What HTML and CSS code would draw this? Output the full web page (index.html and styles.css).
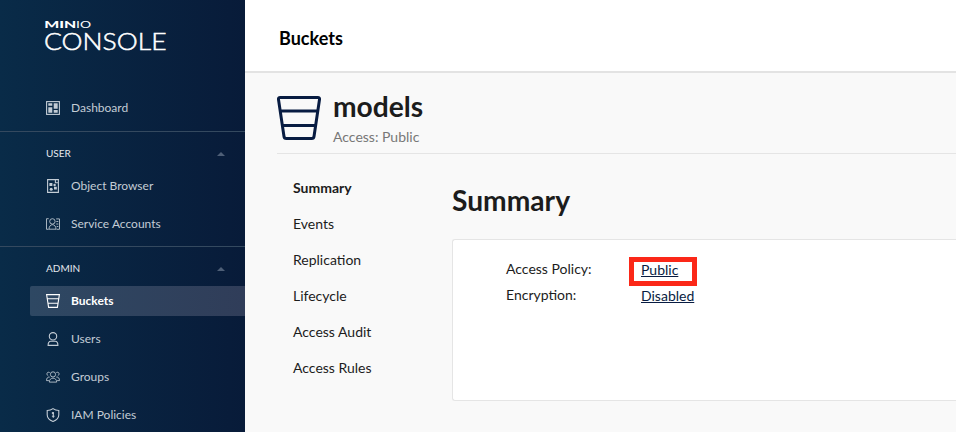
FILE: index.html
```html
<!DOCTYPE html>
<html lang="en">
<head>
<meta charset="utf-8">
<title>MinIO Console</title>
<link rel="stylesheet" href="styles.css">
</head>
<body>
<div class="app">
  <aside class="sidebar">
    <svg class="logo" width="130" height="36" viewBox="0 0 130 36">
      <text class="logo-min" x="-0.7" y="10.3" textLength="32" lengthAdjust="spacingAndGlyphs">MIN</text>
      <text class="logo-io" x="31" y="10.3" textLength="15" lengthAdjust="spacingAndGlyphs">IO</text>
      <text class="logo-console" x="-1" y="32" textLength="122.5" lengthAdjust="spacingAndGlyphs">CONSOLE</text>
    </svg>
    <nav>
      <section class="group first">
        <a class="item"><svg viewBox="0 0 14 14"><rect x=".6" y=".6" width="12.8" height="12.8"/><path class="solid" d="M2.3 2.3h4v2.5h-4zM2.3 6.2h4v5.5h-4zM7.7 2.3h4v5.4h-4zM7.7 9.1h4v2.6h-4z"/></svg><span>Dashboard</span></a>
      </section>
      <section class="group">
        <h2>USER<i class="caret"></i></h2>
        <a class="item"><svg viewBox="0 0 14 14"><path d="M1.6.6h10.8v12.8H1.6zM9.4.8v2.9h2.8"/><path class="solid" d="M3.4 4h3v3h-3zM8 7.8h2.8v2.8H8z"/><circle class="solid" cx="8.6" cy="6" r="1.2"/><circle class="solid" cx="5.2" cy="10.2" r="1.5"/></svg><span>Object Browser</span></a>
        <a class="item"><svg class="thin" viewBox="0 0 14 14"><path d="M2.7 1.7H.5v10.6h2.2M3 12.2c0-6 7-6 7 0zM10.2 1.9h3.3v10.4h-3M10.3 4.5h2M10.3 7h2M10.7 9.5h1.6"/><circle cx="6.4" cy="4.4" r="2.7"/></svg><span>Service Accounts</span></a>
      </section>
      <section class="group">
        <h2>ADMIN<i class="caret"></i></h2>
        <a class="item active"><svg viewBox="0 0 14 14"><path d="M.6.6h12.8l-2 12.8H2.6zM1.2 4.8h11.6M1.9 9.2h10.2"/></svg><span>Buckets</span></a>
        <a class="item"><svg viewBox="0 0 14 14"><circle cx="7" cy="4.3" r="3.7"/><path d="M4.8 9.3h4.4c1.7 0 2.7 1.6 2.7 4.1H2.1c0-2.5 1-4.1 2.7-4.1z"/></svg><span>Users</span></a>
        <a class="item"><svg class="thin" viewBox="0 0 14 14"><circle cx="7" cy="4.4" r="2.6"/><path d="M3.3 12.1c0-5.3 7.4-5.3 7.4 0zM3.7 2.5C1 1.3-.1 4.4 2.2 5.8M10.3 2.5C13 1.3 14.1 4.4 11.8 5.8M3.7 7.1C1.4 6.8.5 8.5.5 10.6h2.4M10.3 7.1c2.3-.3 3.2 1.4 3.2 3.5h-2.4"/></svg><span>Groups</span></a>
        <a class="item"><svg viewBox="0 0 14 14"><path d="M7 .6C5.2 2 3.4 2.5 1.2 2.5v4.2c0 3.2 2.5 5.5 5.8 6.8 3.3-1.3 5.8-3.6 5.8-6.8V2.5C10.6 2.5 8.8 2 7 .6z"/><path d="M5.8 5h1.5v4.8M5.9 8.2h2.6"/><circle class="solid" cx="7" cy="5" r="1.1"/></svg><span>IAM Policies</span></a>
      </section>
    </nav>
  </aside>
  <main>
    <header class="topbar">Buckets</header>
    <div class="page">
      <div class="title-row">
        <svg class="bucket" viewBox="0 0 44 44"><path d="M3.2 1.5h37.6q2 0 1.7 2L37 40.5q-.3 2-2.3 2H9.3q-2 0-2.3-2L1.5 3.5q-.3-2 1.7-2zM3 15h38M5.4 29.5h33.2"/></svg>
        <div>
          <h1>models</h1>
          <p class="access">Access: Public</p>
        </div>
      </div>
      <div class="content">
        <nav class="tabs">
          <a class="selected">Summary</a><a>Events</a><a>Replication</a><a>Lifecycle</a><a>Access Audit</a><a>Access Rules</a>
        </nav>
        <section class="panel">
          <h1>Summary</h1>
          <dl class="card">
            <dt>Access Policy:</dt><dd><a class="highlight">Public</a></dd>
            <dt>Encryption:</dt><dd><a>Disabled</a></dd>
          </dl>
        </section>
      </div>
    </div>
  </main>
</div>
</body>
</html>
```
FILE: styles.css
```css
*, *::after { box-sizing: border-box; }
body { margin: 0; font-family: Lato, sans-serif; overflow: hidden; }
h1, h2, p, dl, dd { margin: 0; }
.app { display: flex; height: 432px; overflow: hidden; }

.sidebar {
  flex: 0 0 245px;
  padding-top: 18px;
  background: linear-gradient(90deg, #092b48 0%, #081b39 100%);
}
.logo { display: block; margin-left: 45px; fill: #fff; overflow: visible; }
.logo-min { font: 900 9.5px Lato, sans-serif; }
.logo-io { font: 400 9.5px Lato, sans-serif; }
.logo-console { font: 300 23.5px Lato, sans-serif; stroke: #fff; stroke-width: .5; }

.group { padding-bottom: 7px; border-bottom: 1px solid #34495f; }
.group.first { padding: 39px 0 8px; }
.group:last-child { border: 0; }
.group h2 {
  display: flex;
  align-items: center;
  justify-content: space-between;
  height: 39px;
  padding: 3px 20px 0 46px;
  color: #e3e8ed;
  font-size: 10px;
  font-weight: 400;
}
.caret {
  margin-top: 1px;
  border: 4px solid transparent;
  border-top: 0;
  border-bottom-color: #4e5f77;
}
.item {
  display: flex;
  align-items: center;
  gap: 11px;
  height: 30px;
  margin-left: 30px;
  padding-left: 16px;
  color: #c3ccd5;
  font-size: 12px;
}
.item span { padding-bottom: 2px; }
.item + .item { margin-top: 8px; }
.item svg {
  width: 14px;
  height: 14px;
  fill: none;
  stroke: #c3ccd5;
  stroke-width: 1.1;
  overflow: visible;
}
.item svg.thin { stroke-width: .85; }
.item svg .solid { fill: #c3ccd5; stroke: none; }
.item.active {
  color: #fff;
  font-weight: 700;
  border-radius: 2px 0 0 2px;
  background: linear-gradient(90deg, #2e4863, #303d59);
}
.item.active svg { stroke: #fff; }

main { flex: 1; min-width: 0; background: #f9f9f9; }
.topbar {
  display: flex;
  align-items: center;
  height: 73px;
  padding: 4px 34px 0;
  border-bottom: 2px solid #e3e3e3;
  background: #fff;
  color: #000;
  font-size: 18px;
  font-weight: 700;
}
.page { padding-left: 32px; color: #1c1c1c; }
.title-row {
  display: flex;
  gap: 12px;
  height: 81px;
  padding-top: 16px;
  border-bottom: 1px solid #e5e5e5;
}
.bucket { width: 44px; height: 44px; margin-top: 7px; fill: none; stroke: #081c42; stroke-width: 3; }
h1 { font-size: 28.2px; line-height: 34px; font-weight: 700; }
.access { margin-top: 5px; color: #777; font-size: 14px; line-height: 18px; }
.content { display: flex; }
.tabs { flex: 0 0 175px; padding: 16px 0 0 16px; }
.tabs a { display: block; height: 36px; line-height: 36px; font-size: 14px; }
.tabs .selected { font-weight: 700; }
.panel { flex: 1; padding-top: 29px; }
.card {
  display: grid;
  grid-template-columns: 135px 1fr;
  grid-auto-rows: 26px;
  align-content: start;
  height: 162px;
  margin-top: 22px;
  padding: 16px 0 0 53px;
  border: 1px solid #e5e5e5;
  border-right: 0;
  border-radius: 3px 0 0 3px;
  background: #fff;
  font-size: 14px;
  line-height: 26px;
}
.card dd { line-height: 28px; }
.card dd a { position: relative; color: #081c42; text-decoration: underline; }
.highlight::after {
  content: "";
  position: absolute;
  left: -12.5px;
  top: -4.5px;
  width: 68px;
  height: 29px;
  border: 5px solid #fb2818;
}
```
